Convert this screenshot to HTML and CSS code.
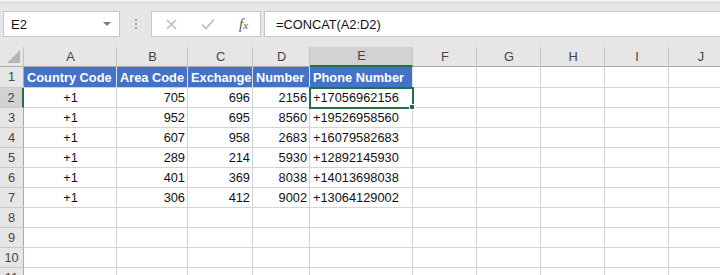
FILE: index.html
```html
<html>
  <head>
    <title>concat phone numbers</title>
    <link rel="stylesheet" href="styles.css">
  </head>
  <body>
    <div id="excel">
      <div class="top-edge"></div>
      <div class="toolbar">
        <div class="name-box">
          <span>E2</span>
          <span class="caret"></span>
        </div>
        <div class="grip"><i></i><i></i><i></i></div>
        <div class="fx-buttons">
          <svg width="11" height="11" viewBox="0 0 11 11"><path d="M1 1 L10 10 M10 1 L1 10" stroke="#b9b9b9" stroke-width="1.4" fill="none"/></svg>
          <svg width="14" height="12" viewBox="0 0 14 12"><path d="M1 6.5 L5 10.5 L13 1.5" stroke="#b9b9b9" stroke-width="1.6" fill="none"/></svg>
          <span class="fx">f<small>x</small></span>
        </div>
        <div class="formula">=CONCAT(A2:D2)</div>
      </div>

      <table class="sheet">
        <thead>
          <tr>
            <th class="corner"><svg width="13" height="13" viewBox="0 0 13 13"><polygon points="13,0 13,13 0,13" fill="#b5b5b5"/></svg></th>
            <th class="c-a">A</th>
            <th class="c-b">B</th>
            <th class="c-c">C</th>
            <th class="c-d">D</th>
            <th class="c-e sel">E</th>
            <th class="c-f">F</th>
            <th class="c-f">G</th>
            <th class="c-f">H</th>
            <th class="c-f">I</th>
            <th class="c-f">J</th>
          </tr>
        </thead>
        <tbody>
          <tr class="first">
            <th>1</th>
            <td class="title">Country Code</td>
            <td class="title">Area Code</td>
            <td class="title">Exchange</td>
            <td class="title">Number</td>
            <td class="title">Phone Number</td>
            <td></td><td></td><td></td><td></td><td></td>
          </tr>
          <tr>
            <th class="sel">2</th>
            <td class="mid">+1</td><td class="num">705</td><td class="num">696</td><td class="num">2156</td>
            <td class="active">+17056962156<span class="handle"></span></td>
            <td></td><td></td><td></td><td></td><td></td>
          </tr>
          <tr>
            <th>3</th>
            <td class="mid">+1</td><td class="num">952</td><td class="num">695</td><td class="num">8560</td><td>+19526958560</td>
            <td></td><td></td><td></td><td></td><td></td>
          </tr>
          <tr>
            <th>4</th>
            <td class="mid">+1</td><td class="num">607</td><td class="num">958</td><td class="num">2683</td><td>+16079582683</td>
            <td></td><td></td><td></td><td></td><td></td>
          </tr>
          <tr>
            <th>5</th>
            <td class="mid">+1</td><td class="num">289</td><td class="num">214</td><td class="num">5930</td><td>+12892145930</td>
            <td></td><td></td><td></td><td></td><td></td>
          </tr>
          <tr>
            <th>6</th>
            <td class="mid">+1</td><td class="num">401</td><td class="num">369</td><td class="num">8038</td><td>+14013698038</td>
            <td></td><td></td><td></td><td></td><td></td>
          </tr>
          <tr>
            <th>7</th>
            <td class="mid">+1</td><td class="num">306</td><td class="num">412</td><td class="num">9002</td><td>+13064129002</td>
            <td></td><td></td><td></td><td></td><td></td>
          </tr>
          <tr><th>8</th><td></td><td></td><td></td><td></td><td></td><td></td><td></td><td></td><td></td><td></td></tr>
          <tr><th>9</th><td></td><td></td><td></td><td></td><td></td><td></td><td></td><td></td><td></td><td></td></tr>
          <tr><th>10</th><td></td><td></td><td></td><td></td><td></td><td></td><td></td><td></td><td></td><td></td></tr>
          <tr><th>11</th><td></td><td></td><td></td><td></td><td></td><td></td><td></td><td></td><td></td><td></td></tr>
        </tbody>
      </table>
    </div>
  </body>
</html>
```

FILE: styles.css
```css
* {
  box-sizing: border-box;
  margin: 0;
  padding: 0;
}
body {
  background: #e6e6e6;
  overflow: hidden;
  font-family: "Liberation Sans", Arial, sans-serif;
  font-size: 12.6px;
  color: #111;
}
#excel {
  width: 720px;
  height: 275px;
  overflow: hidden;
}
.top-edge {
  height: 3px;
  background: #f0f0f0;
  border-bottom: 1px solid #d6d6d6;
}
.toolbar {
  display: flex;
  align-items: center;
  height: 26px;
  margin: 8px 0 10px 3px;
}
.name-box, .fx-buttons, .formula {
  height: 26px;
  background: white;
  border: 1px solid #c6c6c6;
  display: flex;
  align-items: center;
}
.name-box {
  width: 117px;
  padding: 0 7px;
  justify-content: space-between;
  font-size: 13px;
}
.caret {
  width: 0;
  height: 0;
  border-left: 4px solid transparent;
  border-right: 4px solid transparent;
  border-top: 4px solid #7b7b7b;
  margin-right: 1px;
}
.grip {
  width: 31px;
  display: flex;
  flex-direction: column;
  align-items: center;
  gap: 2px;
}
.grip i {
  width: 2px;
  height: 2px;
  background: #a6a6a6;
}
.fx-buttons {
  width: 110px;
  padding-left: 14px;
  gap: 24px;
}
.fx {
  font-family: "Liberation Serif", serif;
  font-style: italic;
  font-size: 15px;
  color: #555;
  line-height: 1;
}
.fx small {
  font-size: 11px;
}
.formula {
  flex-grow: 1;
  margin-left: 3px;
  padding-left: 11px;
  border-right: none;
  font-size: 12.8px;
}
.sheet {
  border-collapse: separate;
  border-spacing: 0;
  table-layout: fixed;
  width: 733px;
  font-family: "Liberation Sans", Arial, sans-serif;
  font-size: 12.8px;
  color: #111;
}
.sheet th, .sheet td {
  height: 20px;
  line-height: 18px;
  border-right: 1px solid #d4d4d4;
  border-bottom: 1px solid #d4d4d4;
  padding: 0 2px 0 3px;
  white-space: nowrap;
}
.sheet td {
  background: white;
  padding-top: 1px;
}
.sheet thead th {
  font-weight: normal;
  color: #444;
  background: #e6e6e6;
  border-right: 1px solid #c4c4c4;
  border-bottom: 1px solid #ababab;
  text-align: center;
}
.sheet thead th.sel {
  background: #d2d2d2;
  border-bottom: 2px solid #217346;
}
.sheet .corner {
  width: 24px;
  padding: 0;
  vertical-align: bottom;
}
.corner svg {
  display: block;
  margin: 0 3px 3px auto;
}
.c-a { width: 93px; }
.c-b { width: 71px; }
.c-c { width: 65px; }
.c-d { width: 57px; }
.c-e { width: 103px; }
.c-f { width: 64px; }
.sheet tbody th {
  font-weight: normal;
  color: #444;
  background: #e6e6e6;
  border-right: 1px solid #ababab;
  border-bottom: 1px solid #c9c9c9;
  padding: 0;
  text-align: center;
}
.sheet tbody th.sel {
  background: #d2d2d2;
  border-right: 2px solid #217346;
}
.sheet tr.first th, .sheet tr.first td {
  height: 21px;
}
.sheet td.title {
  background: #4472c4;
  color: white;
  font-weight: bold;
  overflow: hidden;
  border-right: 1px solid #dde3ef;
  border-bottom: 1px solid #c7d1e6;
}
.mid {
  text-align: center;
}
.num {
  text-align: right;
}
.active {
  position: relative;
  outline: 2px solid #217346;
  outline-offset: -1px;
}
.handle {
  position: absolute;
  right: -3px;
  bottom: -3px;
  width: 6px;
  height: 6px;
  background: #217346;
  border: 1px solid white;
}
```
